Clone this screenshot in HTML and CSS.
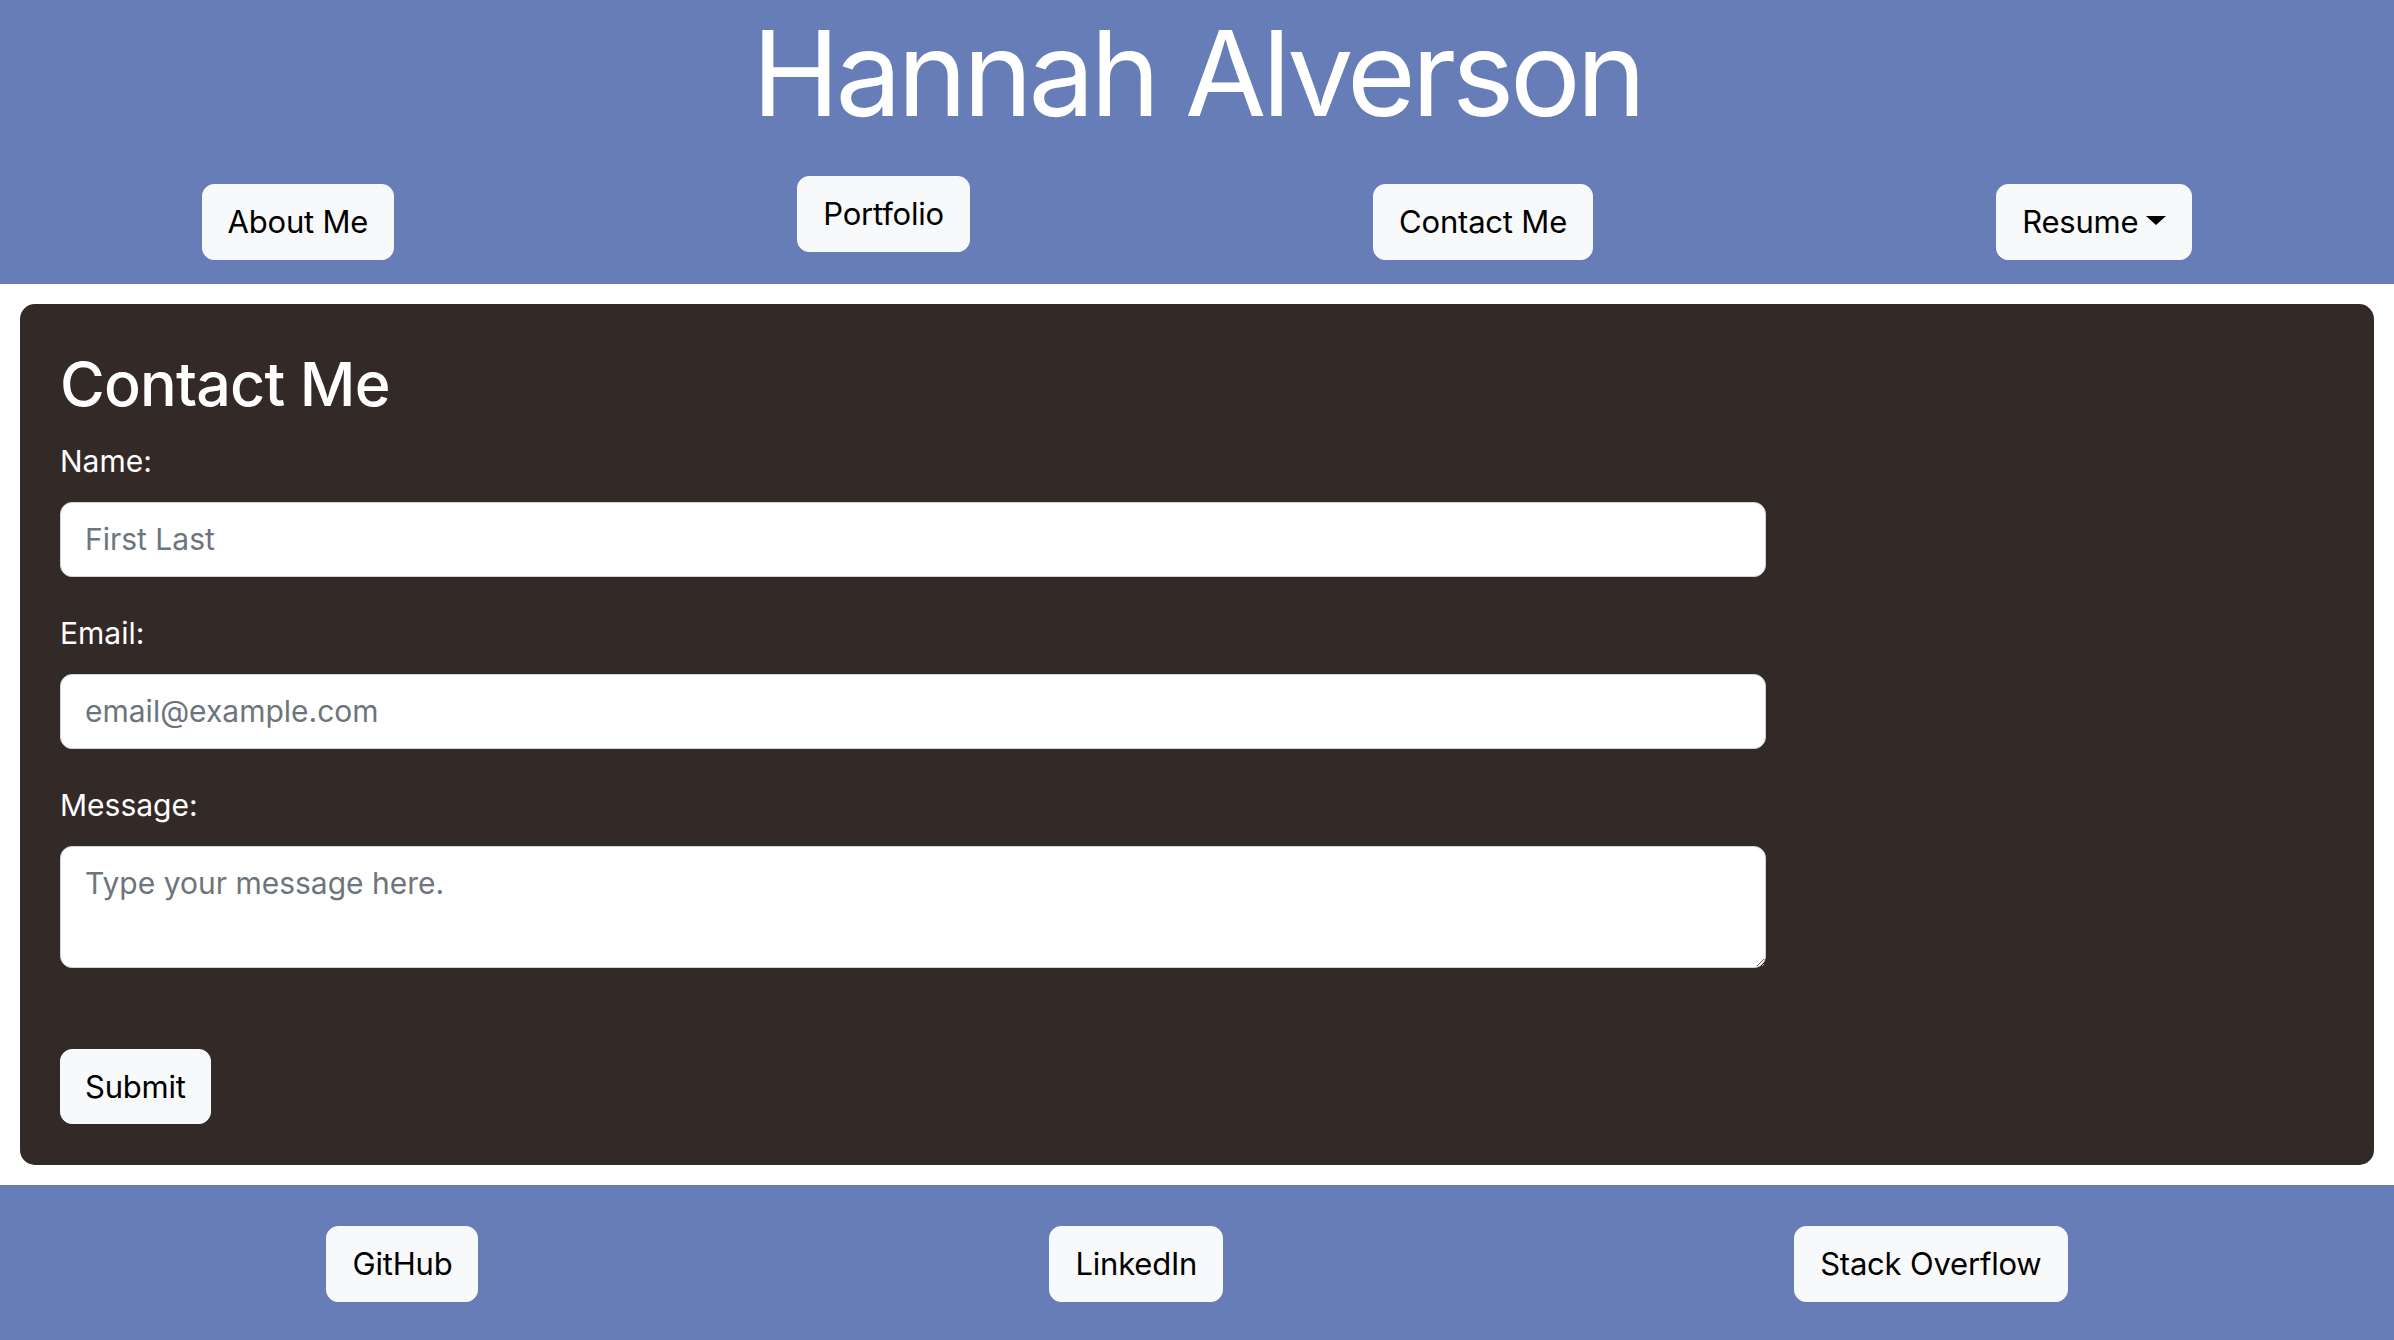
FILE: index.html
```html
<!DOCTYPE html>
<html lang="en">
<head>
  <meta charset="UTF-8" />
  <meta name="viewport" content="width=device-width, initial-scale=1.0"/>
  <title>Hannah Alverson - Contact Me</title>
  <link rel="stylesheet" href="styles.css">
</head>
<body>

  <header class="site-header">
    <h1 class="site-title">Hannah Alverson</h1>
    <nav class="site-nav">
      <a class="btn" href="#about">About Me</a>
      <a class="btn btn-raised" href="#portfolio">Portfolio</a>
      <a class="btn" href="#contact">Contact Me</a>
      <button class="btn dropdown-toggle" type="button">Resume</button>
    </nav>
  </header>

  <main class="page">
    <section class="contact-card" id="contact">
      <h2>Contact Me</h2>
      <form class="contact-form">
        <div class="form-group">
          <label for="name">Name:</label>
          <input type="text" id="name" name="name" placeholder="First Last">
        </div>

        <div class="form-group">
          <label for="email">Email:</label>
          <input type="email" id="email" name="email" placeholder="email@example.com">
        </div>

        <div class="form-group">
          <label for="message">Message:</label>
          <textarea id="message" name="message" placeholder="Type your message here."></textarea>
        </div>

        <button class="btn submit-btn" type="submit">Submit</button>
      </form>
    </section>
  </main>

  <!-- Social links -->
  <footer class="site-footer">
    <a class="btn" href="#github">GitHub</a>
    <a class="btn" href="#linkedin">LinkedIn</a>
    <a class="btn" href="#stackoverflow">Stack Overflow</a>
  </footer>

</body>
</html>
```

FILE: styles.css
```css
body {
  font-family: Inter, 'Noto Sans', sans-serif;
  margin: 0;
  padding: 0;
  background-color: #fff;
}

.site-header {
  background-color: #677db7;
  padding: 3px 0 24px;
}

.site-title {
  margin: 0;
  text-align: center;
  color: #fff;
  font-size: 118px;
  font-weight: 400;
  line-height: 1.2;
  letter-spacing: -4.2px;
}

.site-nav {
  display: flex;
  justify-content: space-around;
  align-items: flex-start;
  margin-top: 31px;
}

.btn {
  display: inline-block;
  margin-top: 8px;
  padding: 14px 25px;
  background-color: #f8f9fa;
  color: #000;
  border: 1px solid #f8f9fa;
  border-radius: 12px;
  font-family: inherit;
  font-size: 31px;
  line-height: 46px;
  letter-spacing: -0.2px;
  text-decoration: none;
  cursor: pointer;
}

.btn-raised {
  margin-top: 0;
}

.dropdown-toggle::after {
  content: "";
  display: inline-block;
  margin-left: 8px;
  vertical-align: 8px;
  border-top: 9px solid #000;
  border-left: 10px solid transparent;
  border-right: 10px solid transparent;
}

.page {
  padding: 20px;
}

.contact-card {
  background-color: #332927;
  color: #fff;
  border-radius: 15px;
  padding: 44px 40px 41px;
}

.contact-card h2 {
  margin: 0 0 18px;
  font-size: 61px;
  font-weight: 500;
  line-height: 1.2;
  letter-spacing: -0.8px;
}

.contact-form {
  width: 75%;
}

.form-group {
  margin-bottom: 34px;
}

label {
  display: block;
  margin-bottom: 18px;
  font-size: 30px;
  line-height: 45px;
}

input,
textarea {
  display: block;
  width: 100%;
  box-sizing: border-box;
  padding: 14px 24px;
  border: 1px solid #ced4da;
  border-radius: 12px;
  background-color: #fff;
  color: #212529;
  font-family: inherit;
  font-size: 30px;
  line-height: 45px;
}

input {
  height: 75px;
}

textarea {
  height: 122px;
  resize: vertical;
}

input::placeholder,
textarea::placeholder {
  color: #6c757d;
}

.submit-btn {
  margin-top: 47px;
  padding: 14px 24px;
  line-height: 45px;
}

.site-footer {
  display: flex;
  justify-content: space-around;
  align-items: center;
  background-color: #677db7;
  padding: 41px 41px 38px;
}

.site-footer .btn {
  margin-top: 0;
}
```
